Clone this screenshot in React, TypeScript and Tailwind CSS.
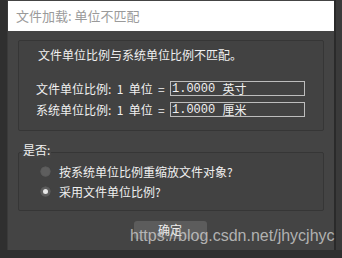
import React from "react";

const cjk = { fontFamily: '"Noto Sans CJK SC", "Noto Sans", sans-serif' };

function Radio({ checked }: { checked?: boolean }) {
  return (
    <div className="w-[11px] h-[11px] rounded-full bg-[#5e5e5e] flex items-center justify-center shadow-[inset_0_0_1px_#222]">
      {checked && <div className="w-[5px] h-[5px] rounded-full bg-[#e8e8e8]" />}
    </div>
  );
}

export default function App() {
  return (
    <div className="w-[342px] h-[258px] bg-[#2f2f2f] flex overflow-hidden" style={cjk}>
      <div className="ml-[7px] w-[327px] h-[250px] bg-[#444444] flex flex-col border-l border-[#3a3a3a]">
        <div className="mt-[1px] h-[30px] bg-white flex items-center pl-[8px] text-[13px] text-[#9a9a9a]">
          文件加载: 单位不匹配
        </div>
        <div className="mx-[10px] mt-[9px] h-[91px] rounded-[2px] border border-[#363636] bg-[#424242] flex flex-col text-[12px] text-[#f0f0f0]">
          <div className="pl-[19px] mt-[6px] leading-[16px]">文件单位比例与系统单位比例不匹配。</div>
          <div className="mt-[18px] flex items-center pl-[17px] h-[15px]">
            <span className="w-[134px] whitespace-pre">文件单位比例:  1  单位  =</span>
            <div className="w-[135px] h-[15px] border border-[#bdbdbd] flex items-center pl-[1px] whitespace-pre" style={{ fontFamily: '"Liberation Mono", "Noto Sans CJK SC", monospace' }}>
              1.0000 <span style={cjk}>英寸</span>
            </div>
          </div>
          <div className="mt-[6px] flex items-center pl-[17px] h-[15px]">
            <span className="w-[134px] whitespace-pre">系统单位比例:  1  单位  =</span>
            <div className="w-[135px] h-[15px] border border-[#bdbdbd] flex items-center pl-[1px] whitespace-pre" style={{ fontFamily: '"Liberation Mono", "Noto Sans CJK SC", monospace' }}>
              1.0000 <span style={cjk}>厘米</span>
            </div>
          </div>
        </div>
        <div className="relative mx-[10px] mt-[21px] h-[59px] rounded-[2px] border border-[#363636] bg-[#424242] flex flex-col text-[12px] text-[#f0f0f0] pl-[21px] pt-[12px] gap-[7px]">
          <div className="absolute left-[3px] top-[-11px] px-[1px] bg-[#444444] leading-[16px]">是否:</div>
          <div className="flex items-center gap-[8px] h-[13px]">
            <Radio />
            <span>按系统单位比例重缩放文件对象?</span>
          </div>
          <div className="flex items-center gap-[8px] h-[13px]">
            <Radio checked />
            <span>采用文件单位比例?</span>
          </div>
        </div>
        <div className="relative mt-[10px] flex justify-center">
          <div className="ml-[-2px] w-[73px] h-[18px] rounded-[3px] bg-[#5c5c5c] text-[12px] text-[#eeeeee] flex items-center justify-center">
            确定
          </div>
          <div
            className="absolute left-[122px] top-[6px] text-[16px] text-[#cfcfcf]/80 leading-[18px] whitespace-nowrap"
            style={{ fontFamily: '"Liberation Sans", Arial, sans-serif' }}
          >
            https://blog.csdn.net/jhycjhyc
          </div>
        </div>
      </div>
      <div className="w-[2px] h-[250px] bg-[#2a2a2a]" />
      <div className="flex-1 h-[250px] bg-[#3a3a3a]" />
    </div>
  );
}
